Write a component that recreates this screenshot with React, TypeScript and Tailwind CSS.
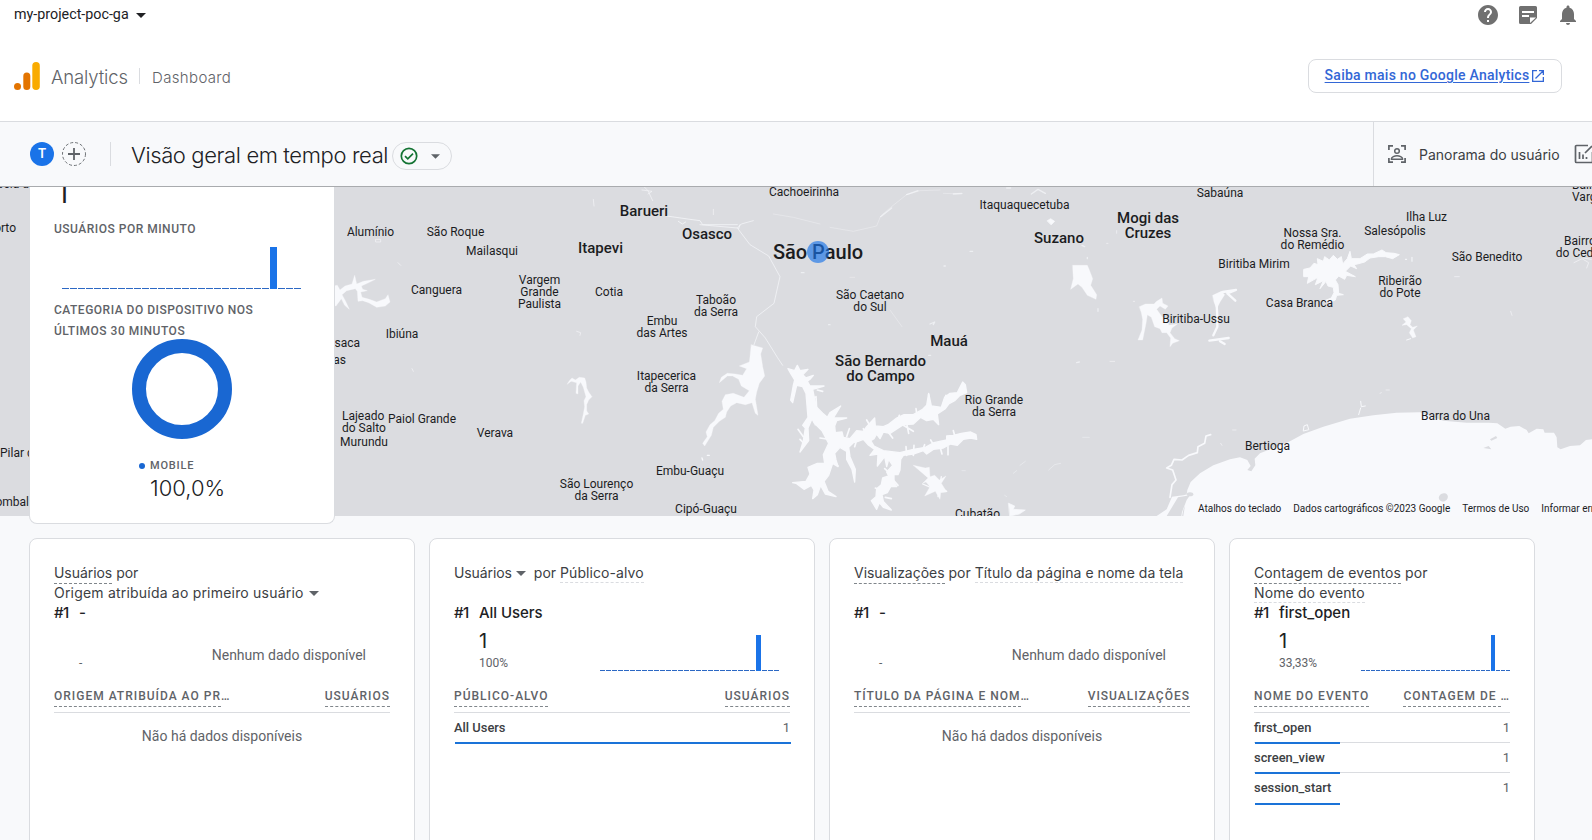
import React from "react";
import { MdHelp, MdNotifications } from "react-icons/md";

const G = "font-['Inter',sans-serif]";

type Label = { t: string[]; x: number; y: number; k?: "m" | "l"; a?: "left" | "right" };

const labels: Label[] = [
  { t: ["Alumínio"], x: 370.5, y: 232 },
  { t: ["São Roque"], x: 455.5, y: 232 },
  { t: ["Mailasqui"], x: 492, y: 251 },
  { t: ["Canguera"], x: 436.5, y: 290 },
  { t: ["Vargem", "Grande", "Paulista"], x: 539.5, y: 292 },
  { t: ["Cotia"], x: 609, y: 292 },
  { t: ["Itapevi"], x: 600.5, y: 248, k: "m" },
  { t: ["Barueri"], x: 644, y: 211, k: "m" },
  { t: ["Osasco"], x: 707, y: 234, k: "m" },
  { t: ["Taboão", "da Serra"], x: 716, y: 306 },
  { t: ["Embu", "das Artes"], x: 662, y: 327 },
  { t: ["Ibiúna"], x: 402, y: 334 },
  { t: ["saca"], x: 360, y: 343, a: "right" },
  { t: ["as"], x: 346, y: 360, a: "right" },
  { t: ["Itapecerica", "da Serra"], x: 666.5, y: 382 },
  { t: ["Lajeado", "do Salto"], x: 342, y: 422, a: "left" },
  { t: ["Murundu"], x: 364, y: 442 },
  { t: ["Paiol Grande"], x: 422, y: 419 },
  { t: ["Verava"], x: 495, y: 433 },
  { t: ["Embu-Guaçu"], x: 690, y: 471 },
  { t: ["São Lourenço", "da Serra"], x: 596.5, y: 490 },
  { t: ["Cipó-Guaçu"], x: 706, y: 509 },
  { t: ["Cachoeirinha"], x: 804, y: 192 },
  { t: ["Itaquaquecetuba"], x: 1024.5, y: 205 },
  { t: ["Suzano"], x: 1059, y: 238, k: "m" },
  { t: ["São Paulo"], x: 818, y: 252, k: "l" },
  { t: ["São Caetano", "do Sul"], x: 870, y: 301 },
  { t: ["Mauá"], x: 949, y: 341, k: "m" },
  { t: ["São Bernardo", "do Campo"], x: 880.5, y: 369, k: "m" },
  { t: ["Rio Grande", "da Serra"], x: 994, y: 406 },
  { t: ["Cubatão"], x: 977.5, y: 514 },
  { t: ["Sabaúna"], x: 1220, y: 193 },
  { t: ["Mogi das", "Cruzes"], x: 1148, y: 226, k: "m" },
  { t: ["Ilha Luz"], x: 1426.5, y: 217 },
  { t: ["Salesópolis"], x: 1395, y: 231 },
  { t: ["Nossa Sra.", "do Remédio"], x: 1312.5, y: 239 },
  { t: ["Biritiba Mirim"], x: 1254, y: 264 },
  { t: ["São Benedito"], x: 1487, y: 257 },
  { t: ["Bairro", "do Cedro"], x: 1580, y: 247 },
  { t: ["Bairro", "Vargem"], x: 1572, y: 191, a: "left" },
  { t: ["Ribeirão", "do Pote"], x: 1400, y: 287 },
  { t: ["Casa Branca"], x: 1299.5, y: 303 },
  { t: ["Biritiba-Ussu"], x: 1196, y: 319 },
  { t: ["Barra do Una"], x: 1455.5, y: 416 },
  { t: ["Bertioga"], x: 1267.5, y: 446 },
  { t: ["bela d"], x: 29, y: 184, a: "right" },
  { t: ["Porto"], x: 16, y: 228, a: "right" },
  { t: ["Pilar do Sul"], x: 0, y: 453, a: "left" },
  { t: ["Pombal"], x: 29, y: 502, a: "right" },
];

const sizes = {
  s: "text-[12px] leading-[12px] font-normal",
  m: "text-[15px] leading-[15px] font-medium",
  l: "text-[20px] leading-[20px] font-medium",
};

function MapLabels() {
  return (
    <>
      {labels.map((l, i) => (
        <div
          key={i}
          className={`absolute whitespace-nowrap text-[#1b1c1f] -translate-y-1/2 ${
            l.a === "left" ? "text-left" : l.a === "right" ? "-translate-x-full text-right" : "-translate-x-1/2 text-center"
          } ${sizes[l.k ?? "s"]}`}
          style={{ left: l.x, top: l.y - (l.k ? 187 : 186.6) }}
        >
          {l.t.map((s) => (
            <div key={s}>{s}</div>
          ))}
        </div>
      ))}
    </>
  );
}

function Water() {
  return (
    <svg className="absolute left-0 top-0" width="1592" height="329" viewBox="0 187 1592 329" fill="#f8f9fc" stroke="#f8f9fc" strokeLinejoin="round" strokeLinecap="round">
      <g transform="translate(330 180) scale(.33333)">
        <path d="M10 318L22 316 30 330 45 318 66 312 74 286 80 312 100 304 136 298 112 310 94 318 98 328 112 332 92 336 96 352 118 358 140 366 166 356 174 344 180 366 166 378 140 382 116 368 98 362 84 364 82 334 76 326 50 332 36 344 46 362 58 388 44 376 34 356 18 378 10 376Z" strokeWidth="1" />
        <path d="M138 178h14v8h-14zM204 248l8 8M740 454l12 4-2 8M246 566l4 8M790 58l2 20M1150 88v16M936 30l30 4-12 8M942 20l12 12 14 30" strokeWidth="3" fill="none" opacity=".6" />
        <path d="M1010 108L1080 118 1110 122 1118 134 1222 134M1226 146L1230 134M1045 124l12 8 10-6" strokeWidth="3" fill="none" opacity=".7" />
        <path d="M712 612L718 602 726 594 736 600 748 592 764 594 768 606 770 624 776 636 786 650 776 660 770 674 770 692 776 702 766 706 758 730 754 730 760 702 764 680 762 662 768 650 760 622 752 606 744 618 744 642 738 640 740 608 724 604Z" strokeWidth="1" />
        <path d="M1116 834l2 6M1132 826h6" strokeWidth="4" />
      </g>
      <g transform="translate(700 180) scale(.33333)">
        <path d="M0 134L112 144 124 132 160 122M112 144L150 194 206 228 240 290 222 370 170 410 166 440 196 474 232 532 248 556M176 456l-14 38" fill="none" strokeWidth="2.5" opacity=".8" />
        <path d="M220 102L280 112 360 132M390 142L460 154 530 138 542 108 572 82 620 44 660 32 720 30M730 40L785 42M450 292h14M570 390L606 440" fill="none" strokeWidth="2" opacity=".5" />
        <path d="M542 110L575 84M620 44l34-12M760 42l26-2M994 42l20-14 22 12M690 432l14-6-4 8M920 24h12M304 278h8M386 434h4M1130 548l8-2M1146 196l8 4M1162 232v4M1194 386v8M810 214h8M732 258h4M686 526h6" fill="none" strokeWidth="4" opacity=".65" />
        <path d="M1042 122l10-6 12 8-10 10z" strokeWidth="2" />
        <path d="M154 494L174 500 188 504 182 522 188 560 194 588 178 610 170 636 166 658 174 706 166 700 156 668 136 674 110 668 92 678 80 696 76 712 58 724 40 742 34 766 14 798 8 790 22 770 18 756 30 734 44 722 56 700 70 688 66 664 76 644 100 640 132 652 148 632 124 618 116 598 98 588 82 588 58 608 64 592 82 580 106 582 128 586 140 566 118 558 148 546Z" strokeWidth="1" />
        <path d="M264 566L284 572 292 556 300 572 324 568 308 584 318 594 340 586 330 598 322 604 330 618 372 618 338 628 344 658 350 682 368 700 382 712 390 698 422 678 406 704 400 714 440 714 410 722 404 738 406 758 426 756 430 772 450 776 470 752 490 754 500 740 524 714 526 738 550 740 564 734 590 714 612 704 640 704 668 688 680 676 686 640 694 678 724 682 734 652 750 640 772 638 788 606 796 614 800 638 780 646 764 662 746 672 736 686 712 702 716 734 700 718 680 722 662 712 640 732 610 734 570 760 550 756 540 776 530 762 522 776 512 782 522 798 550 812 600 818 640 808 676 802 702 788 740 780 740 768 760 766 784 760 812 756 828 764 830 778 812 774 790 778 772 796 752 792 730 804 700 808 680 822 670 812 640 822 610 826 602 838 600 870 594 884 582 884 582 906 590 920 572 920 562 938 546 944 550 964 574 990 550 982 538 968 530 988 514 962 528 950 530 926 544 914 548 894 566 888 560 876 578 856 566 838 560 860 554 830 532 858 534 822 510 826 524 808 504 794 490 778 474 784 460 788 446 802 450 830 466 868 464 906 456 868 440 838 440 814 420 802 404 820 408 840 414 860 398 850 386 886 372 904 384 934 408 950 376 942 362 916 352 944 338 956 342 930 334 916 312 928 288 910 278 908 318 904 330 882 324 862 352 850 374 850 370 824 386 790 366 752 342 728 336 716 324 744 326 782 300 816 310 782 316 744 308 736 324 712 318 640 308 620 290 616 278 668 272 660 280 616 284 600 272 580Z" strokeWidth="4" />
        <path d="M350 690l-2-40M500 760l-10-14M600 730l40 24M620 730l6 30M724 690l14-44M690 700l-4-56M310 770l-16-22M312 790l-12-12M400 836l14 22M570 880l-16-14M580 900l14 16M744 800v24M720 800l6 22M770 788l-10-36M700 794l-8-14M668 810l6-16M560 750l18 24M514 744l-14-24M400 780l-40-6M352 630l16 4M330 660l14-8M470 780l-6 20M640 826l2-30M620 826l-2-26M594 720l4-14M650 700l-2-14M440 770l8-24M360 710l-14 24M540 930l-14-6M556 952l18 4M360 880l-30 10M340 900l30 10" strokeWidth="5" fill="none" />
        <path d="M640 856L676 864 688 862 690 890 704 886 718 900 738 888 724 910 740 936 722 938 720 958 706 934 674 948 690 920 678 906 668 910 684 894Z" strokeWidth="1" />
        <path d="M668 912l32 14M740 934l-30-20M724 890l-10 60" strokeWidth="4" fill="none" />
        <path d="M1118 256L1162 256 1168 270 1178 296 1172 316 1190 344 1188 358 1162 346 1146 322 1134 312 1112 328 1120 296Z" strokeWidth="1" />
        <path d="M926 970L944 978 940 988 976 990 958 1002 930 1008Z" strokeWidth="2" />
        <path d="M960 856l16-12M940 880l10-8M1046 870l18-16 18-4M914 946l6 4M1148 772h20M786 872h10" strokeWidth="2" fill="none" opacity=".6" />
      </g>
      <g transform="translate(1090 180) scale(.33333)">
        <path d="M148 380L166 372 192 372 200 364 216 354 218 370 234 378 226 388 210 378 200 388 216 410 234 420 236 436 262 432 246 444 240 458 254 476 268 482 248 490 240 500 242 474 230 458 216 458 210 446 194 440 184 412 172 404 168 430 158 480 144 480 156 450 158 418 154 398Z" />
        <path d="M378 350L398 336 438 330 412 340 436 362M394 348L380 376 382 410 382 440 370 466M358 482L416 474M390 484l14 8" strokeWidth="7" fill="none" />
        <path d="M368 346l26-12 10 10-14 22-10 20-8-20z" strokeWidth="1" />
        <path d="M642 268L660 264 672 250 684 254 682 236 700 244 704 230 718 240 730 226 742 238 754 230 758 252 772 236 780 214 784 236 810 236 832 222 850 222 876 210 888 218 912 220 928 224 908 236 886 230 866 230 840 234 824 246 802 252 792 254 800 266 782 258 766 274 796 290 770 286 764 298 746 288 736 300 744 314 746 340 760 344 740 346 736 360 716 368 700 364 724 354 732 338 730 322 714 318 708 304 690 326 700 302 676 314 684 292 652 310 656 290 642 290Z" strokeWidth="3" />
        <path d="M940 416l14-6 10 12-4 12 8 8 14-4-12 12 8 20-10 4-10-16 6-12-14-12-14 2 12-10z" strokeWidth="1" />
        <path d="M946 238h4M966 232v12M962 476l-12 4" strokeWidth="3" fill="none" />
        <path d="M1452 248l24-12 20 12-6 16M1480 234l24 4M80 152v8M130 364h4M60 544h14M1094 290h14M1262 394l4 12M870 640l4-2M888 630h10M50 190h4M392 790l4 6M428 750h10" strokeWidth="3" fill="none" opacity=".6" />
        <path d="M812 664L814 680 826 678M812 684L806 704M640 752l2-14 10-4 4 14z" strokeWidth="3" fill="none" />
        <path d="M280 1008L292 930 302 906 330 880 370 856 420 838 450 832 472 840 482 858 472 870 484 874 496 856 494 836 510 820 560 800 600 784 640 762 700 740 780 716 850 706 920 698 990 697 1060 722 1130 728 1196 728 1222 730 1246 746 1262 740 1288 738 1310 750 1316 760 1340 746 1360 748 1364 758 1392 758 1400 772 1402 802 1412 808 1440 798 1470 796 1488 780 1506 778V1010H280Z" stroke="none" />
        <path d="M240 952L246 914 258 900 248 870 230 864 244 856 252 838 276 840 296 826 322 818 324 800 344 790 348 768 362 764" strokeWidth="5" fill="none" />
        <path d="M200 1008L230 988 246 950 280 946 304 940 292 960 280 990 276 1010Z" stroke="none" />
        <path d="M264 952L300 946 290 960 276 996 274 1008 230 1008Z" fill="#dbdce0" stroke="none" />
        <ellipse cx="300" cy="943" rx="10" ry="6" fill="#dbdce0" stroke="none" />
        <ellipse cx="1060" cy="952" rx="14" ry="12" transform="rotate(-25 1060 952)" fill="#dbdce0" stroke="none" />
        <path d="M1180 804L1196 798 1204 808ZM1200 778L1218 768 1222 774 1204 782Z" fill="#dbdce0" stroke="none" />
      </g>
    </svg>
  );
}

function MiniBars({ pitch, width, barHeight, highlight }: { pitch: number; width: number; barHeight: number; highlight: number }) {
  return (
    <svg width={pitch * 30} height={barHeight} shapeRendering="crispEdges">
      {Array.from({ length: 30 }, (_, i) =>
        i === highlight ? (
          <rect key={i} x={i * pitch} y={0} width={width} height={barHeight} fill="#1a73e8" />
        ) : (
          <rect key={i} x={i * pitch} y={barHeight - 1} width={width} height={1} fill="#2c68c4" />
        ),
      )}
    </svg>
  );
}

function Arrow({ className = "" }: { className?: string }) {
  return (
    <svg width="10" height="5" viewBox="0 0 10 5" className={`shrink-0 fill-current ${className}`}>
      <path d="M0 0H10L5 5Z" />
    </svg>
  );
}

const dashed = "border-b border-dashed border-[#80868b]";
const faint = "border-b border-dashed border-[#dadce0]";

function Card({
  width,
  title,
  name,
  value,
  share,
  chart,
  head,
  rows,
}: {
  width: string;
  title: React.ReactNode;
  name: string;
  value?: string;
  share: string;
  chart?: React.ReactNode;
  head: [React.ReactNode, React.ReactNode];
  rows: { n: string; full?: boolean }[];
}) {
  return (
    <section className={`${width} h-[320px] shrink-0 rounded-lg border border-[#dadce0] bg-white px-6 pt-6`}>
      <div className={`${G} h-10 whitespace-nowrap text-[14px] leading-5 text-[#3c4043]`}>{title}</div>
      <div className={`${G} flex h-5 items-center gap-2 text-[15px] font-medium text-[#202124]`}>
        <span className="w-[17px] whitespace-nowrap tracking-[-0.6px]">#1</span>
        <span className="tracking-[-0.05px]">{name}</span>
      </div>
      <div className="flex h-[58px] justify-between">
        <div className="flex w-20 flex-col pl-[25px]">
          <span className={`${G} flex h-[33px] items-center pt-[3px] text-[20px] text-[#202124]`}>{value}</span>
          <span className="text-[12px] leading-[14px] text-[#5f6368]">{share}</span>
        </div>
        {chart ?? <div className="pr-6 pt-[22px] text-[14px] leading-5 text-[#5f6368]">Nenhum dado disponível</div>}
      </div>
      <div className="flex h-8 items-start justify-between border-b border-[#dadce0] pt-[5px] text-[12px] leading-[20px] font-medium tracking-[1px] text-[#5f6368]">
        {head[0]}
        {head[1]}
      </div>
      {rows.length === 0 && <div className="pt-[13px] text-center text-[14px] leading-5 text-[#5f6368]">Não há dados disponíveis</div>}
      {rows.map((r, i) => (
        <div key={r.n} className="h-[30px]">
          <div className="flex h-[30px] items-center justify-between text-[12.9px] text-[#5f6368]">
            <span className="font-medium text-[#3c4043]">{r.n}</span>
            <span>1</span>
          </div>
          <div className={`relative h-px ${i < rows.length - 1 ? "-mt-px bg-[#dadce0]" : rows.length > 1 ? "" : "-mt-px"}`}>
            <div className={`absolute left-px top-0 h-0.5 bg-[#1a73d8] ${r.full ? "w-full" : "w-[85px]"}`} />
          </div>
        </div>
      ))}
    </section>
  );
}

const Head = ({ children, more }: { children: string; more?: boolean }) => (
  <span className="flex whitespace-pre">
    <span className={`h-[21px] ${dashed}`}>{children}</span>
    {more && <span>…</span>}
  </span>
);

export default function App() {
  return (
    <div className="flex h-[840px] w-[1592px] flex-col overflow-hidden bg-[#f8f9fb] font-['Roboto',sans-serif]">
      <header className="h-[121px] shrink-0 bg-white">
        <div className="flex h-[30px] items-center justify-between pl-3.5 pr-3">
          <div className="flex items-center gap-[7px] text-[14.3px] text-[#202124]">
            <span>my-project-poc-ga</span>
            <Arrow />
          </div>
          <div className="flex items-center gap-4 text-[#707070]">
            <MdHelp size={24} />
            <svg width="24" height="24" viewBox="0 0 24 24" fill="currentColor">
              <path fillRule="evenodd" d="M4.5 3h15A1.5 1.5 0 0 1 21 4.500V15l-6 6H4.500A1.500 1.500 0 0 1 3 19.500v-15A1.500 1.500 0 0 1 4.500 3zM6 8v2h12V8zM6 12v2h7v-2zM14 14.500V20l6-5.500z" />
            </svg>
            <MdNotifications size={24} />
          </div>
        </div>
        <div className="flex h-[91px] items-center justify-between pl-3.5 pr-[30px]">
          <div className={`${G} flex items-center text-[#5f6368]`}>
            <svg width="26" height="28" viewBox="0 0 26 28">
              <circle cx="3.500" cy="24.500" r="3.500" fill="#e37400" />
              <rect x="9.300" y="10.500" width="7" height="17.500" rx="3.500" fill="#e37400" />
              <rect x="18.300" y="0" width="7.500" height="28" rx="3.750" fill="#f9ab00" />
            </svg>
            <span className="ml-[11px] w-[76px] whitespace-nowrap pt-1 text-[18.5px] font-light tracking-[-0.15px]">Analytics</span>
            <span className="ml-3 mr-3 h-4 w-px bg-[#dadce0]" />
            <span className="pt-[5px] text-[15px] font-light tracking-[0.35px]">Dashboard</span>
          </div>
          <a className="flex h-[34px] w-[254px] items-center justify-center gap-1 rounded-lg border border-[#dadce0] text-[14px] font-medium tracking-[0.25px] text-[#3367d6]">
            <span className="whitespace-nowrap underline underline-offset-2">Saiba mais no Google Analytics</span>
            <svg className="-ml-px mr-px" width="12" height="12" viewBox="0 0 12 12" fill="none" stroke="currentColor" strokeWidth="1.300">
              <path d="M5 .650H.650v10.700h10.700V7M7 .650h4.350V5M11.300.700 3.500 8.500" />
            </svg>
          </a>
        </div>
      </header>

      <div className="flex h-[66px] shrink-0 border-b border-t border-b-[#a9abae] border-t-[#dadce0]">
        <div className="flex flex-1 items-center pl-[30px]">
          <span className={`${G} flex size-6 items-center justify-center rounded-full bg-[#1a73e8] text-[13px] font-semibold text-white`}>T</span>
          <svg className="ml-2" width="24" height="24" viewBox="0 0 24 24" fill="none" stroke="#5f6368">
            <circle cx="12" cy="12" r="11.500" strokeDasharray="3 2" strokeWidth=".9" />
            <path d="M6 12h12M12 6v12" strokeWidth="1.800" />
          </svg>
          <span className="ml-6 h-6 w-px bg-[#dadce0]" />
          <h1 className={`${G} ml-[20px] w-[257px] whitespace-nowrap pt-[3px] text-[22px] font-light tracking-[-0.38px] text-[#202124]`}>Visão geral em tempo real</h1>
          <span className="ml-1 mt-1 flex h-7 w-[60px] items-center rounded-full border border-[#dadce0] pl-[7px]">
            <svg width="18" height="18" viewBox="0 0 18 18" fill="none" stroke="#137333" strokeWidth="1.700">
              <circle cx="9" cy="9" r="7.700" />
              <path d="m5 9.200 2.800 2.700L13 6.700" />
            </svg>
            <Arrow className="ml-[13px] w-[9px] text-[#5f6368]" />
          </span>
        </div>
        <div className="flex w-[219px] items-center border-l border-[#dadce0] pl-3.5 text-[#5f6368]">
          <svg className="shrink-0" width="18" height="18" viewBox="0 0 18 18" fill="none" stroke="currentColor" strokeWidth="1.700">
            <path d="M5 .9H.9V5M13 .9h4.100V5M5 17.100H.9V13M13 17.100h4.100V13" />
            <circle cx="9" cy="6" r="2.300" strokeWidth="1.500" />
            <path d="M3.500 14.200v-.700c0-1.500 3-2.700 5.500-2.700s5.500 1.200 5.500 2.700v.700z" strokeWidth="1.500" />
          </svg>
          <span className={`${G} ml-[13px] w-[141px] shrink-0 whitespace-nowrap text-[14px] text-[#3c4043]`}>Panorama do usuário</span>
          <svg className="ml-[14px] shrink-0" width="20" height="20" viewBox="0 0 20 20" fill="none" stroke="currentColor" strokeWidth="1.700">
            <path d="M14 1.500H2.500a1 1 0 0 0-1 1v15a1 1 0 0 0 1 1h15a1 1 0 0 0 1-1V8" />
            <path d="M5.500 8v7M9 10.500V15M12.500 13v2M11 9l7-7" />
          </svg>
        </div>
      </div>

      <main className="flex-1">
        <div className="relative h-[329px] w-full bg-[#dbdce0]">
          <div className="absolute inset-0 overflow-hidden">
            <Water />
            <MapLabels />
            <div className="absolute left-[807px] top-[54px] size-[22px] rounded-full bg-[#1a73e8]/65" />
            <div className="absolute bottom-0 right-0 flex h-[15px] w-[394px] items-center gap-3 whitespace-nowrap text-[10px] text-[#1b1c1f]">
              <span>Atalhos do teclado</span>
              <span>Dados cartográficos ©2023 Google</span>
              <span>Termos de Uso</span>
              <span>Informar erro no mapa</span>
            </div>
          </div>
          <section className="relative ml-[29px] h-[337px] w-[306px] overflow-hidden rounded-b-lg border border-t-0 border-[#dadce0] bg-white px-6">
            <div className="flex h-[16px] items-end overflow-hidden pl-[1px]">
              <span className={`${G} text-[36px] leading-[26px] font-light text-[#202124]`}>1</span>
            </div>
            <div className="pt-4 text-[12px] leading-[21px] font-medium tracking-[0.5px] text-[#5f6368]">USUÁRIOS POR MINUTO</div>
            <div className="flex h-[60px] items-end pb-[11px] pl-2">
              <MiniBars pitch={8} width={7} barHeight={42} highlight={26} />
            </div>
            <div className="text-[12px] leading-[21px] font-medium tracking-[0.5px] text-[#5f6368]">
              CATEGORIA DO DISPOSITIVO NOS
              <br />
              ÚLTIMOS 30 MINUTOS
            </div>
            <svg className="mx-auto -mt-[3px]" width="100" height="100" viewBox="0 0 100 100">
              <circle cx="50" cy="50" r="43" fill="none" stroke="#1967d2" strokeWidth="14" />
            </svg>
            <div className="ml-[85px] mt-[19px] flex h-4 items-center gap-[5px] text-[11px] font-medium tracking-[0.8px] text-[#5f6368]">
              <span className="size-1.5 rounded-full bg-[#1967d2]" />
              MOBILE
            </div>
            <div className={`${G} ml-[96px] text-[22px] leading-7 font-light text-[#202124]`}>100,0%</div>
          </section>
        </div>

        <div className="flex gap-3.5 pl-[29px] pt-[22px]">
          <Card
            width="w-[386px]"
            title={
              <>
                <div className="flex gap-1 tracking-[-0.05px]"><span className={`h-[21px] ${dashed}`}>Usuários</span><span>por</span></div>
                <div className="-mt-px flex items-center gap-[5px] tracking-[0.2px]"><span>Origem atribuída ao primeiro usuário</span><Arrow className="text-[#5f6368]" /></div>
              </>
            }
            name="-"
            share="-"
            head={[<Head key="a" more>ORIGEM ATRIBUÍDA AO PR</Head>, <Head key="b">USUÁRIOS</Head>]}
            rows={[]}
          />
          <Card
            width="w-[386px]"
            title={
              <div className="flex items-start">
                <span className="tracking-[-0.1px]">Usuários</span><Arrow className="ml-1 mr-2 mt-2 text-[#5f6368]" /><span className="mr-1">por</span><span className={`h-[20px] tracking-[0.08px] ${faint}`}>Público-alvo</span>
              </div>
            }
            name="All Users"
            value="1"
            share="100%"
            chart={<div className="pr-[10px] pt-[12px]"><MiniBars pitch={6} width={5} barHeight={36} highlight={26} /></div>}
            head={[<Head key="a">PÚBLICO-ALVO</Head>, <Head key="b">USUÁRIOS</Head>]}
            rows={[{ n: "All Users", full: true }]}
          />
          <Card
            width="w-[386px]"
            title={
              <div className="flex gap-1 whitespace-nowrap">
                <span className={`h-[21px] tracking-[-0.03px] ${dashed}`}>Visualizações</span><span>por</span><span className={`h-[20px] tracking-[0.04px] ${faint}`}>Título da página e nome da tela</span>
              </div>
            }
            name="-"
            share="-"
            head={[<Head key="a" more>TÍTULO DA PÁGINA E NOM</Head>, <Head key="b">VISUALIZAÇÕES</Head>]}
            rows={[]}
          />
          <Card
            width="w-[306px]"
            title={
              <>
                <div className="flex gap-1 tracking-[0.1px]"><span className={`h-[21px] ${dashed}`}>Contagem de eventos</span><span>por</span></div>
                <div className="-mt-px flex tracking-[0.12px]"><span className={`h-[20px] ${faint}`}>Nome do evento</span></div>
              </>
            }
            name="first_open"
            value="1"
            share="33,33%"
            chart={<div className="-mr-px pt-[12px]"><MiniBars pitch={5} width={4} barHeight={36} highlight={26} /></div>}
            head={[<Head key="a">NOME DO EVENTO</Head>, <Head key="b" more>CONTAGEM DE </Head>]}
            rows={[{ n: "first_open" }, { n: "screen_view" }, { n: "session_start" }]}
          />
        </div>
      </main>
    </div>
  );
}
